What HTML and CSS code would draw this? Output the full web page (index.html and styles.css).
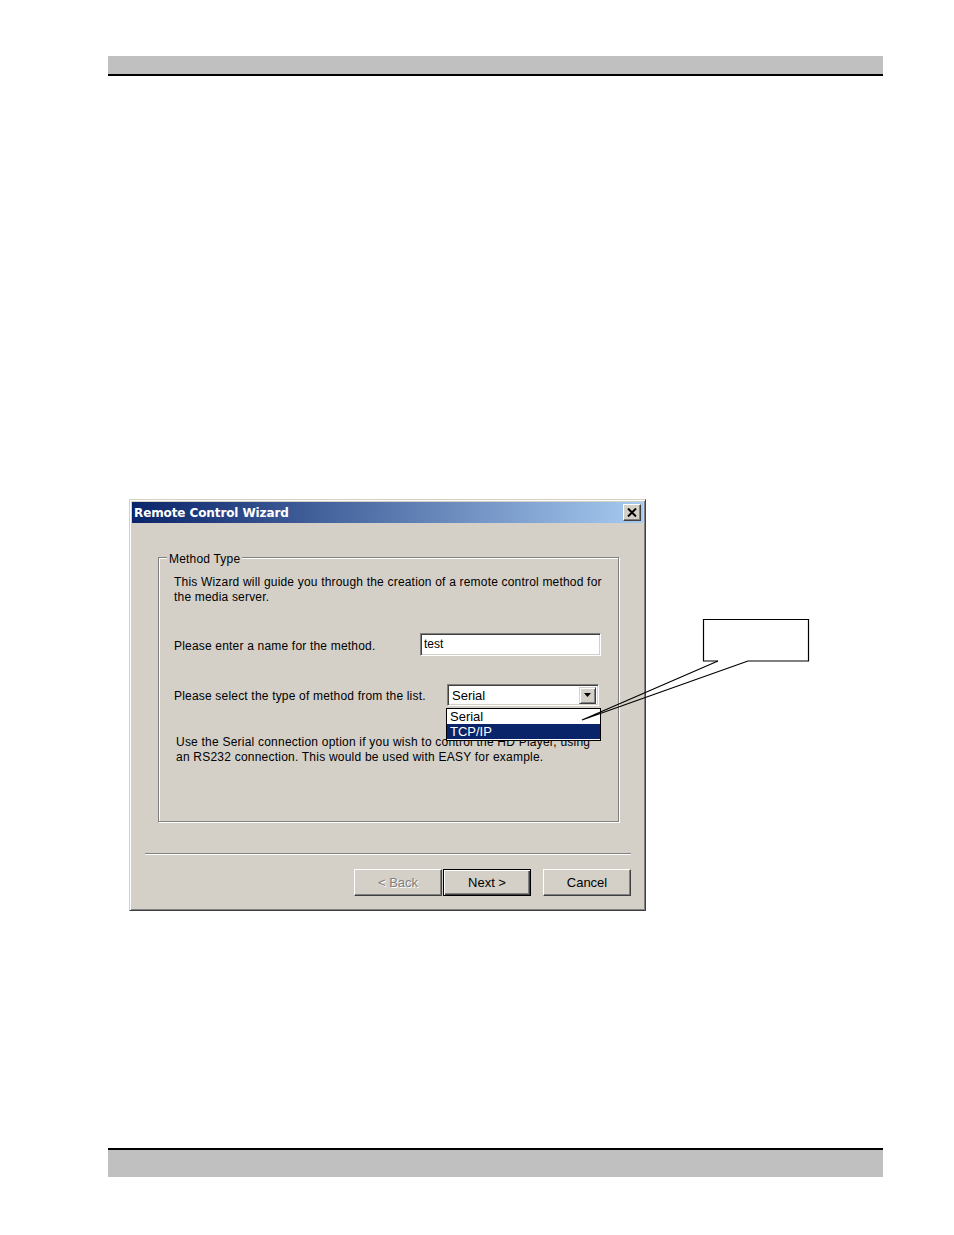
FILE: index.html
```html
<!DOCTYPE html>
<html>
<head>
<meta charset="utf-8">
<link rel="stylesheet" href="styles.css">
</head>
<body>
<div class="page">
  <div class="hdr"></div>
  <div class="dialog">
    <div class="titlebar">
      <span class="title">Remote Control Wizard</span>
      <span class="closebtn"><svg width="10" height="9" viewBox="0 0 10 9"><path d="M1 0.5 L9 8.5 M9 0.5 L1 8.5" stroke="#000" stroke-width="2"/></svg></span>
    </div>
    <div class="dbody">
      <div class="group">
        <span class="legend">Method Type</span>
        <p class="para">This Wizard will guide you through the creation of a remote control method for<br>the media server.</p>
        <div class="row row1">
          <span class="label">Please enter a name for the method.</span>
          <span class="textbox">test</span>
        </div>
        <div class="row row2">
          <span class="label">Please select the type of method from the list.</span>
          <span class="select">
            <span class="selval">Serial</span>
            <span class="arrowbtn"><svg width="7" height="4" viewBox="0 0 7 4"><path d="M0 0 H7 L3.5 4 Z" fill="#000"/></svg></span>
            <span class="droplist">
              <span class="opt">Serial</span>
              <span class="opt sel">TCP/IP</span>
            </span>
          </span>
        </div>
        <p class="para para2">Use the Serial connection option if you wish to control the HD Player, using<br>an RS232 connection. This would be used with EASY for example.</p>
      </div>
      <div class="sep"></div>
      <div class="buttons">
        <span class="btn disabled">&lt; Back</span>
        <span class="btn default">Next &gt;</span>
        <span class="btn cancel">Cancel</span>
      </div>
    </div>
  </div>
  <div class="ftr"></div>
  <svg class="callout" width="954" height="1235" viewBox="0 0 954 1235">
    <path d="M718 661 L703.5 661 L703.5 619.5 L808.5 619.5 L808.5 661 L748 661" fill="none" stroke="#000" stroke-width="1.2"/>
    <path d="M718 661 L582 720 L748 661" fill="none" stroke="#000" stroke-width="1.2"/>
  </svg>
</div>
</body>
</html>
```
FILE: styles.css
```css
html, body {
  margin: 0;
  padding: 0;
  background: #fff;
}
.page {
  position: relative;
  width: 954px;
  height: 1235px;
  overflow: hidden;
  font-family: "Liberation Sans", Arial, sans-serif;
  font-size: 12px;
  color: #000;
}
.hdr {
  margin: 56px 0 0 108px;
  width: 775px;
  height: 18px;
  background: #c0c0c0;
  border-bottom: 2px solid #000;
}
.dialog {
  box-sizing: border-box;
  margin: 423px 0 0 129px;
  width: 517px;
  height: 412px;
  background: #d4d0c8;
  border: 1px solid;
  border-color: #d4d0c8 #404040 #404040 #d4d0c8;
  box-shadow: inset 1px 1px 0 #fff, inset -1px -1px 0 #808080;
  padding: 2px;
  display: flex;
  flex-direction: column;
}
.titlebar {
  height: 21px;
  display: flex;
  align-items: center;
  justify-content: space-between;
  background: linear-gradient(to right, #0a246a, #a6caf0);
  padding: 0 2px 0 2px;
}
.title {
  font-family: "DejaVu Sans", Verdana, sans-serif;
  font-weight: bold;
  font-size: 12px;
  color: #fff;
  letter-spacing: -0.1px;
  padding-top: 1px;
}
.closebtn {
  box-sizing: border-box;
  width: 18px;
  height: 17px;
  background: #d4d0c8;
  border: 1px solid;
  border-color: #fff #404040 #404040 #fff;
  box-shadow: inset -1px -1px 0 #808080;
  display: flex;
  align-items: center;
  justify-content: center;
}
.dbody {
  flex: 1;
  display: flex;
  flex-direction: column;
  padding: 34px 0 0 0;
}
.group {
  position: relative;
  box-sizing: border-box;
  margin: 0 24px 0 26px;
  height: 265px;
  border: 1px solid #808080;
  box-shadow: 1px 1px 0 #fff, inset 1px 1px 0 #fff;
  padding: 17px 0 0 15px;
  letter-spacing: 0.19px;
}
.legend {
  position: absolute;
  top: -6px;
  left: 8px;
  padding: 0 2px 0 2px;
  background: #d4d0c8;
  line-height: 15px;
}
.para {
  margin: 0;
  line-height: 15px;
  white-space: nowrap;
}
.row {
  display: flex;
  align-items: center;
  margin-top: 28px;
}
.row1 .label { width: 246px; }
.row2 .label { width: 273px; }
.label { line-height: 15px; padding-top: 3px; }
.textbox {
  box-sizing: border-box;
  width: 181px;
  height: 23px;
  background: #fff;
  border: 1px solid;
  border-color: #808080 #fff #fff #808080;
  box-shadow: inset 1px 1px 0 #404040, inset -1px -1px 0 #d4d0c8;
  padding: 2px 0 0 3px;
  line-height: 16px;
  letter-spacing: 0;
}
.select {
  position: relative;
  box-sizing: border-box;
  width: 152px;
  height: 22px;
  background: #fff;
  border: 1px solid;
  border-color: #808080 #fff #fff #808080;
  box-shadow: inset 1px 1px 0 #404040, inset -1px -1px 0 #d4d0c8;
  display: flex;
  align-items: center;
  justify-content: space-between;
  padding: 1px 2px 0 4px;
  letter-spacing: 0;
}
.selval { line-height: 16px; font-size: 13px; }
.arrowbtn {
  box-sizing: border-box;
  width: 17px;
  height: 17px;
  margin-top: -1px;
  background: #d4d0c8;
  border: 1px solid;
  border-color: #d4d0c8 #404040 #404040 #d4d0c8;
  box-shadow: inset 1px 1px 0 #fff, inset -1px -1px 0 #808080;
  display: flex;
  align-items: center;
  justify-content: center;
}
.droplist {
  position: absolute;
  top: 23px;
  left: -2px;
  box-sizing: border-box;
  width: 155px;
  height: 33px;
  background: #fff;
  border: 1px solid #000;
  display: flex;
  flex-direction: column;
}
.opt {
  height: 15px;
  line-height: 15px;
  padding-left: 3px;
  font-size: 13px;
}
.opt.sel {
  background: #0a246a;
  color: #fff;
}
.para2 {
  margin-top: 29px;
  margin-left: 2px;
  letter-spacing: 0.22px;
}
.sep {
  margin: 31px 12px 0 13px;
  border-top: 1px solid #808080;
  border-bottom: 1px solid #fff;
}
.buttons {
  display: flex;
  justify-content: flex-end;
  margin: 14px 12px 0 0;
}
.btn {
  box-sizing: border-box;
  width: 88px;
  height: 27px;
  display: flex;
  align-items: center;
  justify-content: center;
  background: #d4d0c8;
  border: 1px solid;
  border-color: #fff #404040 #404040 #fff;
  box-shadow: inset -1px -1px 0 #808080;
  font-size: 13px;
}
.btn.disabled {
  color: #808080;
  text-shadow: 1px 1px 0 #fff;
  margin-right: 1px;
}
.btn.default {
  border: 1px solid #000;
  box-shadow: inset 1px 1px 0 #fff, inset -1px -1px 0 #404040, inset -2px -2px 0 #808080;
  margin-right: 12px;
}
.ftr {
  margin: 237px 0 0 108px;
  width: 775px;
  height: 27px;
  background: #c0c0c0;
  border-top: 2px solid #000;
}
.callout {
  position: absolute;
  left: 0;
  top: 0;
  pointer-events: none;
}
```
